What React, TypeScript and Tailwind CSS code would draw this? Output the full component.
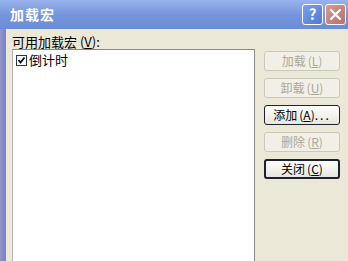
import React from "react";

const font = { fontFamily: '"Noto Sans CJK SC", "Liberation Sans", sans-serif' };

function Btn({
  label,
  hot,
  rest,
  disabled,
  strong,
}: {
  label: string;
  hot: string;
  rest?: string;
  disabled?: boolean;
  strong?: boolean;
}) {
  const base =
    "h-[20px] w-[76px] flex items-center justify-center rounded-[3px] text-[12px] leading-none";
  const look = disabled
    ? "border border-[#cbc8bb] bg-[#f2f0e6] text-[#aca899]"
    : strong
      ? "border-2 border-[#1d2230] bg-gradient-to-b from-white to-[#e8e6dc] text-black"
      : "border border-[#1d2230] bg-gradient-to-b from-white to-[#e8e6dc] text-black";
  return (
    <div className={base + " " + look}>
      <span>{label}</span>
      <span className="ml-[2px]">
        (<span className="underline">{hot}</span>)
      </span>
      {rest && <span className="tracking-[2px]">{rest}</span>}
    </div>
  );
}

export default function App() {
  return (
    <div className="w-[348px] h-[261px] overflow-hidden flex flex-col" style={font}>
      {/* title bar */}
      <div className="h-[29px] shrink-0 flex items-center justify-between pl-[10px] pr-[2px] bg-gradient-to-b from-[#9ab3ec] via-[#7596de] to-[#6a8cd8]">
        <span className="text-white text-[14px] font-bold tracking-[1px]">加载宏</span>
        <div className="flex gap-[2px]">
          <div className="w-[21px] h-[21px] rounded-[3px] border border-white bg-gradient-to-br from-[#7aa0ee] to-[#4f78d6] flex items-center justify-center text-white text-[15px] font-bold">
            ?
          </div>
          <div className="w-[21px] h-[21px] rounded-[3px] border border-white bg-gradient-to-br from-[#d79a94] to-[#b8706c] flex items-center justify-center">
            <svg width="13" height="13" viewBox="0 0 13 13">
              <path d="M2 2 L11 11 M11 2 L2 11" stroke="white" strokeWidth="2.2" strokeLinecap="round" />
            </svg>
          </div>
        </div>
      </div>

      {/* body */}
      <div className="flex-1 flex">
        <div className="w-[6px] shrink-0 bg-gradient-to-r from-[#9396c6] to-[#7281cb]" />
        <div className="flex-1 flex bg-[#ebe8d7] pl-[6px] pt-[5px]">
          <div className="w-[243px] flex flex-col">
            <div className="h-[15px] text-[13px] leading-[15px] text-black">
              可用加载宏 (<span className="underline">V</span>):
            </div>
            <div className="h-[230px] bg-white border border-[#8a8a8a] border-l-[#b8b8b0] pt-[3px] pl-[3px]">
              <div className="flex items-center gap-[2px] h-[14px]">
                <div className="w-[11px] h-[11px] border border-[#1c3a60] bg-white flex items-center justify-center">
                  <svg width="9" height="9" viewBox="0 0 9 9">
                    <path d="M1.5 4 L3.5 6.5 L7.5 1.5" stroke="#111" strokeWidth="1.8" fill="none" />
                  </svg>
                </div>
                <span className="text-[13px] leading-[14px] text-black">倒计时</span>
              </div>
            </div>
          </div>
          <div className="ml-[9px] pt-[17px] flex flex-col gap-[7px]">
            <Btn label="加载" hot="L" disabled />
            <Btn label="卸载" hot="U" disabled />
            <Btn label="添加" hot="A" rest="..." />
            <Btn label="删除" hot="R" disabled />
            <Btn label="关闭" hot="C" strong />
          </div>
        </div>
      </div>
    </div>
  );
}
